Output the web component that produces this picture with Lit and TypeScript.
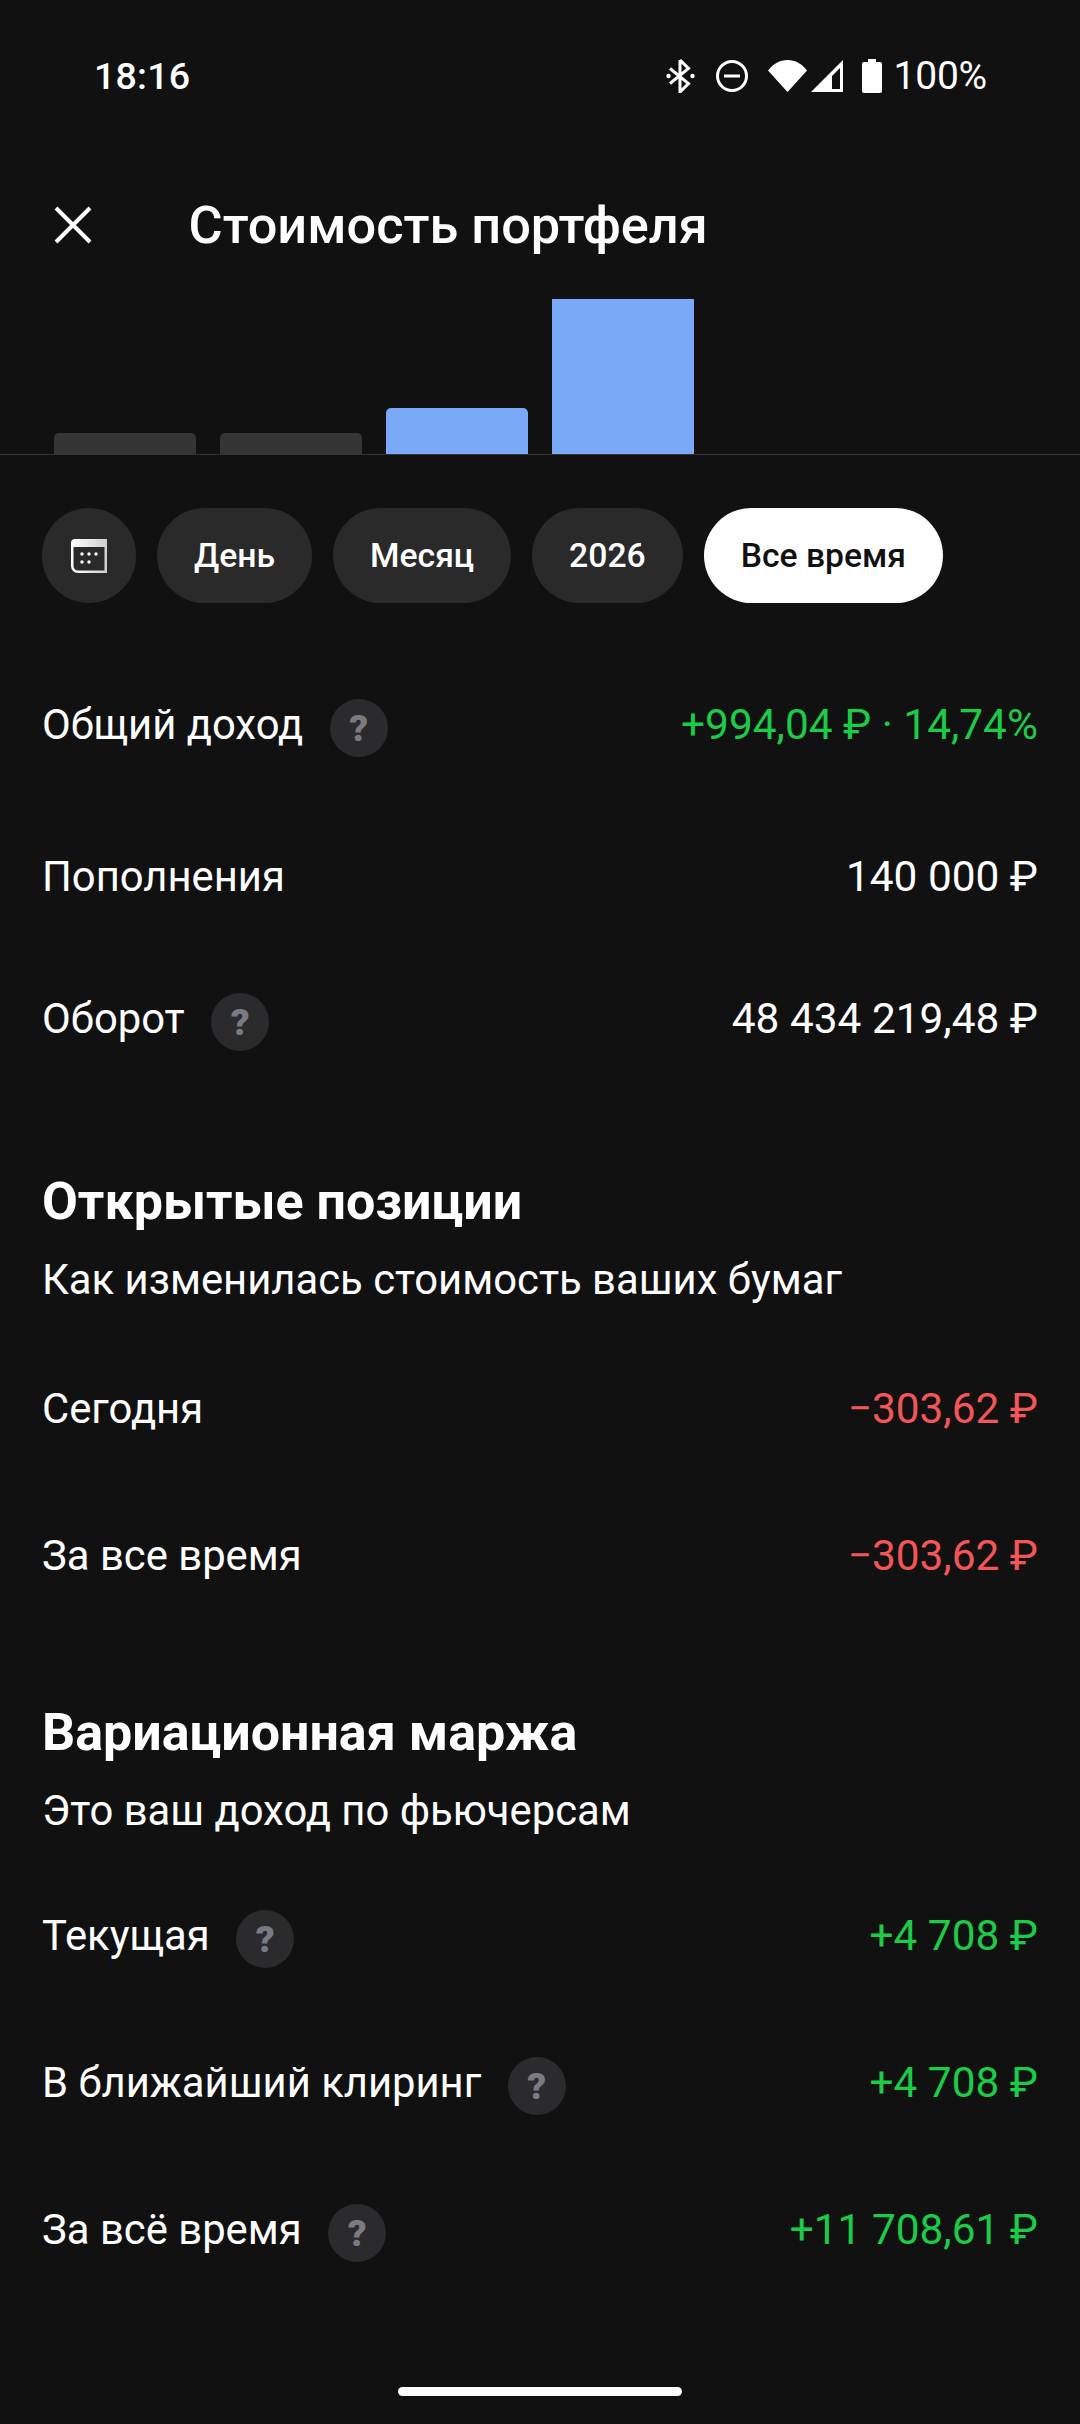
import { LitElement, html, css, nothing } from "lit";
import { customElement } from "lit/decorators.js";

type Row = { label: string; value: string; tone?: string; help?: boolean; gap: string };

const top: Row[] = [
  { label: "Общий доход", value: "+994,04 ₽ · 14,74%", tone: "pos", help: true, gap: "g71" },
  { label: "Пополнения", value: "140 000 ₽", gap: "g52" },
  { label: "Оборот", value: "48 434 219,48 ₽", help: true, gap: "g42" },
];
const open: Row[] = [
  { label: "Сегодня", value: "−303,62 ₽", tone: "neg", gap: "g48" },
  { label: "За все время", value: "−303,62 ₽", tone: "neg", gap: "g47" },
];
const margin: Row[] = [
  { label: "Текущая", value: "+4 708 ₽", tone: "pos", help: true, gap: "g44" },
  { label: "В ближайший клиринг", value: "+4 708 ₽", tone: "pos", help: true, gap: "g47" },
  { label: "За всё время", value: "+11 708,61 ₽", tone: "pos", help: true, gap: "g47" },
];

@customElement("app-root")
export class AppRoot extends LitElement {
  static styles = css`
    :host { display: block; width: 1080px; height: 2424px; background: #111112; color: #fff; font-family: Roboto, "Noto Sans", sans-serif; overflow: hidden; position: relative; }
    .status { height: 152px; box-sizing: border-box; padding: 0 93px 0 94px; display: flex; align-items: center; justify-content: space-between; }
    .status .time { font-size: 37.600px; font-weight: 500; letter-spacing: 0.2px; }
    .status .icons { display: flex; align-items: center; }
    .status .pct { font-size: 39px; font-weight: 400; margin-left: 11px; letter-spacing: -0.2px; }
    .bt { margin-right: 21px; } .dnd { margin-right: 20px; } .wifi { margin-right: 4px; } .sig { margin-right: 19px; }
    .header { height: 146px; display: flex; align-items: center; box-sizing: border-box; padding-left: 54px; }
    .header h1 { margin: 0 0 0 96.500px; font-size: 52.300px; font-weight: 500; line-height: 60px; }
    .chart { height: 156px; border-bottom: 1px solid #333336; display: flex; align-items: flex-end; gap: 24.500px; padding-left: 54px; }
    .bar { width: 141.500px; }
    .bar.grey { height: 21px; background: #353536; border-radius: 5px 5px 0 0; }
    .bar.mid { height: 46px; background: #7aaaf7; border-radius: 5px 5px 0 0; }
    .bar.big { height: 155px; background: #7aaaf7; }
    .chips { display: flex; gap: 21px; padding: 53px 42px 0; }
    .chip { height: 95px; border-radius: 48px; background: #2a2a2b; display: flex; align-items: center; justify-content: center; font-size: 33.700px; font-weight: 500; padding: 0 37px; }
    .chip.cal { width: 94px; padding: 0; box-sizing: border-box; }
    .chip.on { background: #fff; color: #111; }
    .row { height: 100px; padding: 0 42px; display: flex; align-items: center; font-size: 41.800px; }
    .g71 { margin-top: 71px; } .g52 { margin-top: 52px; } .g42 { margin-top: 42px; } .g48 { margin-top: 48px; } .g47 { margin-top: 47px; } .g44 { margin-top: 44px; }
    .value { margin-left: auto; font-size: 42.400px; }
    .pos { color: #1ccb48; } .neg { color: #f25656; }
    .help { width: 58px; height: 58px; border-radius: 50%; background: #2b2b2e; color: #7a7a82; margin: 8px 0 0 26.500px; display: flex; align-items: center; justify-content: center; font-size: 37px; font-weight: 900; }
    .sec { padding: 0 42px; }
    .sec h2 { margin: 0; font-size: 52px; font-weight: 700; line-height: 60px; }
    .sec p { margin: 18px 0 0; font-size: 41.800px; line-height: 60px; }
    .sec.one { margin-top: 104px; }
    .sec.two { margin-top: 98px; }
    .home { position: absolute; left: 398px; bottom: 28px; width: 284px; height: 9px; border-radius: 5px; background: #fff; }
  `;

  private rows(list: Row[]) {
    return list.map(
      (r) => html`<div class="row ${r.gap}">
        <span>${r.label}</span>
        ${r.help ? html`<span class="help">?</span>` : nothing}
        <span class="value ${r.tone ?? ""}">${r.value}</span>
      </div>`
    );
  }

  render() {
    return html`
      <div class="status">
        <span class="time">18:16</span>
        <span class="icons">
          <svg class="bt" width="29" height="34" viewBox="0 0 29 34"><path d="M14 1v32l8.500-8.500L4 9.500M14 1l8.500 8.500L4 24.500" fill="none" stroke="#fff" stroke-width="3"/><circle cx="2.500" cy="17" r="2.200" fill="#fff"/><circle cx="26.500" cy="17" r="2.200" fill="#fff"/></svg>
          <svg class="dnd" width="32" height="32" viewBox="0 0 32 32"><circle cx="16" cy="16" r="14.500" fill="none" stroke="#fff" stroke-width="3"/><rect x="8" y="14.500" width="16" height="3" fill="#fff"/></svg>
          <svg class="wifi" width="39" height="32" viewBox="0 0 39 32"><path d="M0 10.500C5 4 12 0 19.500 0S34 4 39 10.500L19.500 32z" fill="#fff"/></svg>
          <svg class="sig" width="32" height="32" viewBox="0 0 32 32"><path fill-rule="evenodd" d="M32 0v32H0zM29 8L21 16v13h8z" fill="#fff"/></svg>
          <svg width="20" height="34" viewBox="0 0 20 34"><path d="M6 0h8v3h4a2 2 0 0 1 2 2v27a2 2 0 0 1-2 2H2a2 2 0 0 1-2-2V5a2 2 0 0 1 2-2h4z" fill="#fff"/></svg>
          <span class="pct">100%</span>
        </span>
      </div>
      <div class="header">
        <svg width="38" height="38" viewBox="0 0 38 38"><path d="M2 2l34 34M36 2L2 36" stroke="#fff" stroke-width="4" fill="none"/></svg>
        <h1>Стоимость портфеля</h1>
      </div>
      <div class="chart">
        <div class="bar grey"></div><div class="bar grey"></div><div class="bar mid"></div><div class="bar big"></div>
      </div>
      <div class="chips">
        <div class="chip cal">
          <svg width="36" height="34" viewBox="0 0 36 34"><defs><linearGradient id="calg" x1="0" x2="1" y1="0" y2="0"><stop offset="0" stop-color="#fff"/><stop offset="1" stop-color="#cfcfcf"/></linearGradient></defs><path fill-rule="evenodd" d="M4 0h32v34H7a7 7 0 0 1-7-7V4a4 4 0 0 1 4-4zM2.500 8v19a4.500 4.500 0 0 0 4.500 4.500h26.500V8z" fill="url(#calg)"/><g fill="#fff"><circle cx="11" cy="15" r="1.700"/><circle cx="18" cy="15" r="1.700"/><circle cx="25" cy="15" r="1.700"/><circle cx="11" cy="23" r="1.700"/><circle cx="18" cy="23" r="1.700"/></g></svg>
        </div>
        <div class="chip">День</div>
        <div class="chip">Месяц</div>
        <div class="chip">2026</div>
        <div class="chip on">Все время</div>
      </div>
      ${this.rows(top)}
      <div class="sec one"><h2>Открытые позиции</h2><p>Как изменилась стоимость ваших бумаг</p></div>
      ${this.rows(open)}
      <div class="sec two"><h2>Вариационная маржа</h2><p>Это ваш доход по фьючерсам</p></div>
      ${this.rows(margin)}
      <div class="home"></div>
    `;
  }
}
